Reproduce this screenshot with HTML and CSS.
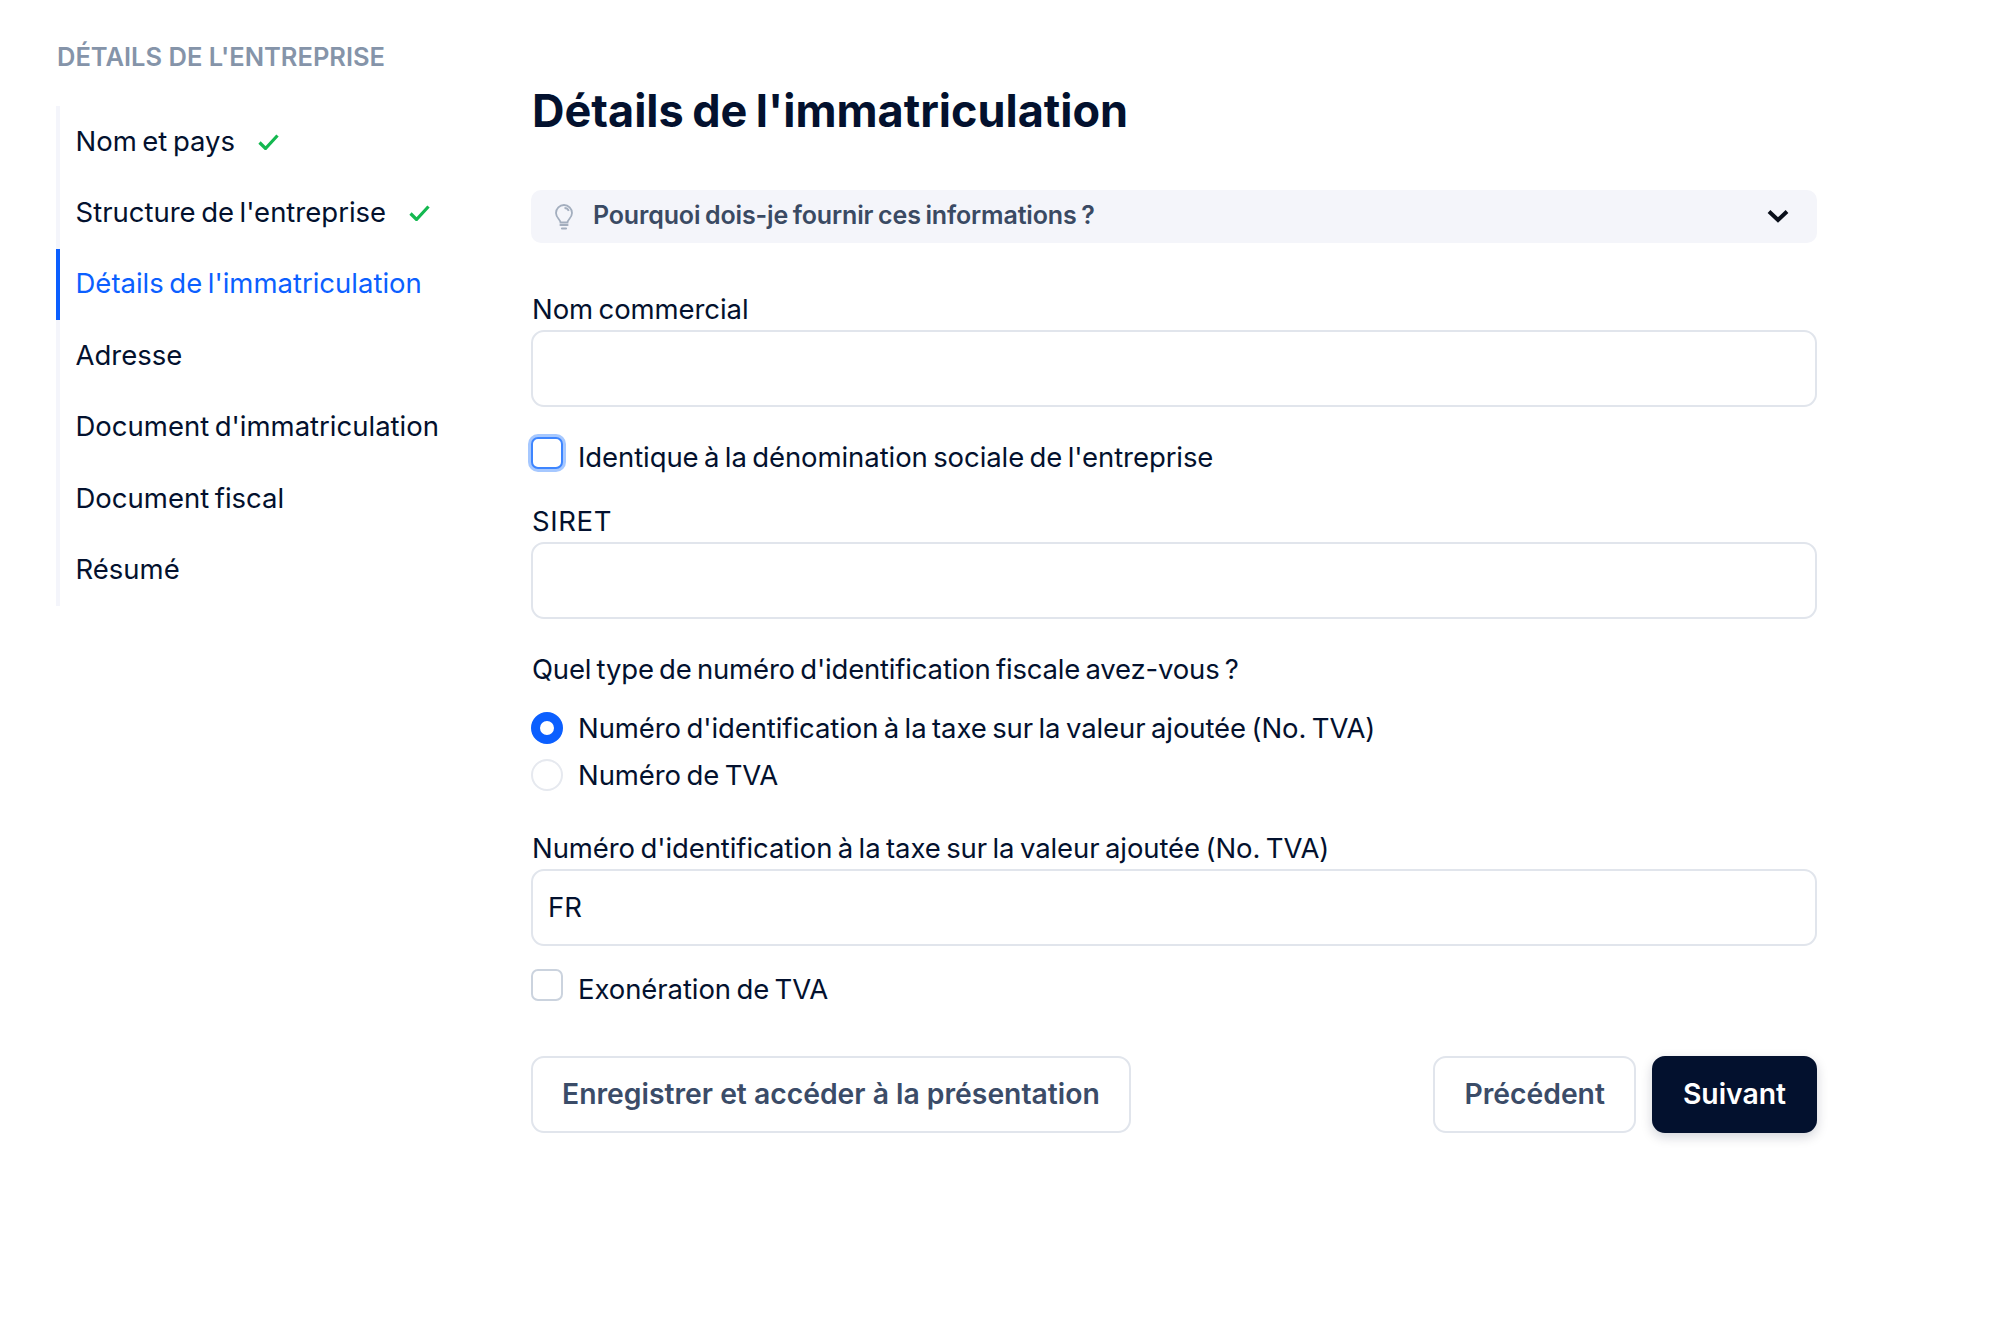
FILE: index.html
```html
<!DOCTYPE html>
<html lang="fr">
<head>
<meta charset="utf-8">
<title>Détails de l'immatriculation</title>
<link rel="stylesheet" href="styles.css">
</head>
<body>
<div class="page">
  <aside class="side">
    <div class="side-title">DÉTAILS DE L'ENTREPRISE</div>
    <nav class="nav">
      <a class="nav-item"><span class="nav-text">Nom et pays</span><svg class="check" viewBox="0 0 21 16"><path d="M1.500 8.500 7.500 14.500 19.500 1.500"/></svg></a>
      <a class="nav-item"><span class="nav-text">Structure de l'entreprise</span><svg class="check" viewBox="0 0 21 16"><path d="M1.500 8.500 7.500 14.500 19.500 1.500"/></svg></a>
      <a class="nav-item active"><span class="nav-text">Détails de l'immatriculation</span></a>
      <a class="nav-item"><span class="nav-text">Adresse</span></a>
      <a class="nav-item"><span class="nav-text">Document d'immatriculation</span></a>
      <a class="nav-item"><span class="nav-text">Document fiscal</span></a>
      <a class="nav-item"><span class="nav-text">Résumé</span></a>
    </nav>
  </aside>
  <main class="main">
    <h1 class="title">Détails de l'immatriculation</h1>
    <div class="info">
      <svg class="bulb" viewBox="0 0 18 26"><path class="bulb-line" d="M5.500 18.500c0-3-4.500-4.500-4.500-9.500C1 4.600 4.600 1 9 1s8 3.600 8 8c0 5-4.500 6.500-4.500 9.500z"/><path class="bulb-line" d="M9.500 4c2 0 3.500 1 4.300 2.800"/><path class="bulb-base" d="M5.500 21h7M7 24.500h4"/></svg>
      <span class="info-text">Pourquoi dois-je fournir ces informations ?</span>
      <svg class="chev" viewBox="0 0 22 14"><path d="M2 2.500l9 8.500 9-8.500"/></svg>
    </div>
    <label class="label l-first">Nom commercial</label>
    <div class="input"></div>
    <div class="opt opt-check opt-focus"><span class="box focus"></span><span class="opt-text">Identique à la dénomination sociale de l'entreprise</span></div>
    <label class="label l-siret">SIRET</label>
    <div class="input"></div>
    <div class="question">Quel type de numéro d'identification fiscale avez-vous ?</div>
    <div class="opt opt-r1"><span class="radio on"></span><span>Numéro d'identification à la taxe sur la valeur ajoutée (No. TVA)</span></div>
    <div class="opt opt-r2"><span class="radio"></span><span>Numéro de TVA</span></div>
    <label class="label l-vat">Numéro d'identification à la taxe sur la valeur ajoutée (No. TVA)</label>
    <div class="input">FR</div>
    <div class="opt opt-check opt-ex"><span class="box"></span><span class="opt-text">Exonération de TVA</span></div>
    <div class="actions">
      <button class="btn btn-save">Enregistrer et accéder à la présentation</button>
      <div class="actions-right">
        <button class="btn btn-prev">Précédent</button>
        <button class="btn btn-next">Suivant</button>
      </div>
    </div>
  </main>
</div>
</body>
</html>
```

FILE: styles.css
```css
* { box-sizing: border-box; }
html, body { margin: 0; background: #fff; }
body {
  font-family: "Inter", "Noto Sans", sans-serif;
  color: #03112e;
  font-size: 27.5px;
  word-spacing: -2.2px;
}
.page {
  width: 2000px;
  height: 1327px;
  display: flex;
  padding-left: 56px;
}
.side { width: 475px; flex: none; padding-top: 41px; }
.side-title {
  font-size: 25.500px;
  line-height: 32px;
  font-weight: 600;
  color: #8594a9;
  margin-left: 1px;
  word-spacing: 0;
}
.nav {
  margin-top: 33px;
  border-left: 4px solid #f4f5fb;
}
.nav-item {
  display: flex;
  align-items: center;
  gap: 23px;
  height: 71.4px;
  padding-left: 15.500px;
  margin-left: -4px;
  border-left: 4px solid transparent;
}
.nav-text { padding-bottom: 2px; }
.nav-item.active { color: #0b5fff; border-left-color: #0b5fff; }
.check { width: 21px; height: 16px; fill: none; stroke: #14b850; stroke-width: 3.2; }
.main { width: 1286px; flex: none; letter-spacing: -0.08px; }
.title {
  margin: 83px 0 0 1px;
  font-size: 45px;
  line-height: 56px;
  font-weight: 650;
  letter-spacing: 0;
  color: #03112e;
}
.info {
  margin-top: 51px;
  height: 53px;
  background: #f4f5fa;
  border-radius: 10px;
  display: flex;
  align-items: center;
  padding: 0 28px 0 23px;
}
.bulb { width: 18px; height: 26px; flex: none; fill: none; margin-left: 1px; }
.bulb-line { stroke: #a3aebe; stroke-width: 1.8; }
.bulb-base { stroke: #a3aebe; stroke-width: 2.2; stroke-linecap: round; }
.info-text {
  margin-left: 20px;
  padding-bottom: 4px;
  font-size: 25px;
  font-weight: 600;
  letter-spacing: -0.15px;
  word-spacing: -1.4px;
  color: #3a4a63;
  flex: 1;
}
.chev { width: 22px; height: 14px; margin-bottom: 2px; fill: none; stroke: #0a0f1a; stroke-width: 4; }
.label { display: block; line-height: 36px; margin-left: 1px; }
.l-first { margin-top: 48px; }
.l-siret { margin-top: 28px; letter-spacing: 0.6px; }
.l-vat { margin-top: 37px; }
.input {
  height: 77px;
  margin-top: 3px;
  border: 2px solid #e1e5ec;
  border-radius: 13px;
  padding: 0 15px;
  display: flex;
  align-items: center;
}
.opt { display: flex; align-items: center; gap: 15px; height: 36px; }
.opt-check { align-items: flex-start; height: 38px; }
.opt-text { margin-top: 2px; line-height: 36px; }
.opt-focus { margin-top: 30px; }
.question { margin: 32px 0 0 1px; line-height: 36px; letter-spacing: -0.18px; }
.opt-r1 { margin-top: 22.500px; }
.opt-r2 { margin-top: 11px; }
.opt-ex { margin-top: 23px; }
.box {
  width: 32px;
  height: 32px;
  flex: none;
  border: 2px solid #cbd3de;
  border-radius: 7px;
  background: #fff;
}
.box.focus {
  border: 2.500px solid #3d85ff;
  box-shadow: 0 0 0 3px #a6c8ff;
}
.radio {
  width: 32px;
  height: 32px;
  flex: none;
  border: 2px solid #e6e9ef;
  border-radius: 50%;
}
.radio.on { border: 9.500px solid #0b5fff; }
.actions {
  margin-top: 49px;
  display: flex;
  justify-content: space-between;
}
.actions-right { display: flex; gap: 16px; }
.btn {
  height: 77px;
  font: 600 28.300px "Inter", "Noto Sans", sans-serif;
  border-radius: 13px;
  border: 2.500px solid #e1e5ec;
  background: #fff;
  color: #3b4c68;
  padding: 0 29px;
}
.btn-next {
  background: #03112e;
  border-color: #03112e;
  color: #fff;
  box-shadow: 0 4px 12px rgba(3, 17, 46, .18);
}
```
